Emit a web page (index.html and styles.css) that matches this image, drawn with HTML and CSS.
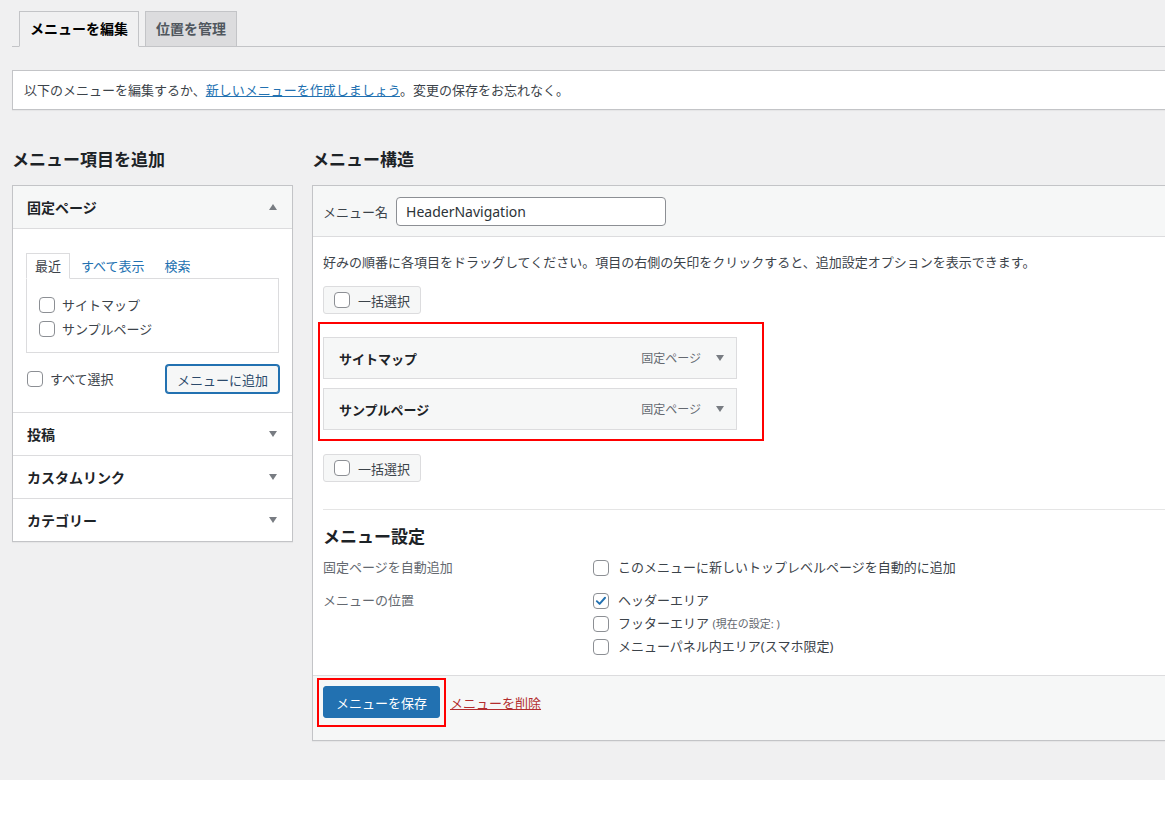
FILE: index.html
```html
<!DOCTYPE html>
<html lang="ja">
<head>
<meta charset="utf-8">
<title>メニュー</title>
<link rel="stylesheet" href="styles.css">
</head>
<body>
<div class="page">
  <div class="tabs">
    <span class="tab tab-active">メニューを編集</span>
    <span class="tab">位置を管理</span>
  </div>

  <div class="notice">
    <p>以下のメニューを編集するか、<a href="#">新しいメニューを作成しましょう</a>。変更の保存をお忘れなく。</p>
  </div>

  <div class="columns">
    <div class="col-left">
      <h2 class="col-title">メニュー項目を追加</h2>
      <div class="accordion">
        <div class="acc-section">
          <div class="acc-head acc-open"><span>固定ページ</span><i class="tri tri-up"></i></div>
          <div class="acc-body">
            <ul class="mini-tabs">
              <li class="mini-active">最近</li>
              <li><a href="#">すべて表示</a></li>
              <li><a href="#">検索</a></li>
            </ul>
            <div class="tab-panel">
              <label class="check"><span class="cb"></span>サイトマップ</label>
              <label class="check"><span class="cb"></span>サンプルページ</label>
            </div>
            <div class="add-row">
              <label class="check"><span class="cb"></span>すべて選択</label>
              <button class="btn-secondary">メニューに追加</button>
            </div>
          </div>
        </div>
        <div class="acc-section">
          <div class="acc-head"><span>投稿</span><i class="tri"></i></div>
        </div>
        <div class="acc-section">
          <div class="acc-head"><span>カスタムリンク</span><i class="tri"></i></div>
        </div>
        <div class="acc-section">
          <div class="acc-head"><span>カテゴリー</span><i class="tri"></i></div>
        </div>
      </div>
    </div>

    <div class="col-right">
      <h2 class="col-title">メニュー構造</h2>
      <div class="menu-box">
        <div class="menu-head">
          <label class="name-label">メニュー名</label>
          <input class="name-input" type="text" value="HeaderNavigation">
        </div>
        <div class="menu-body">
          <p class="instruction">好みの順番に各項目をドラッグしてください。項目の右側の矢印をクリックすると、追加設定オプションを表示できます。</p>
          <label class="bulk"><span class="cb"></span>一括選択</label>

          <div class="highlight items-box">
            <div class="menu-item"><span class="item-title">サイトマップ</span><span class="item-meta">固定ページ<i class="tri"></i></span></div>
            <div class="menu-item"><span class="item-title">サンプルページ</span><span class="item-meta">固定ページ<i class="tri"></i></span></div>
          </div>

          <label class="bulk bulk-bottom"><span class="cb"></span>一括選択</label>

          <div class="settings">
            <h3 class="settings-title">メニュー設定</h3>
            <div class="setting-row">
              <div class="setting-label">固定ページを自動追加</div>
              <div class="setting-options">
                <label class="option"><span class="cb"></span><span>このメニューに新しいトップレベルページを自動的に追加</span></label>
              </div>
            </div>
            <div class="setting-row setting-row-2">
              <div class="setting-label">メニューの位置</div>
              <div class="setting-options">
                <label class="option"><span class="cb cb-checked"><svg viewBox="0 0 16 16" width="16" height="16"><path d="M3.2 8.2 6.4 11.3 12.6 4.3" fill="none" stroke="#2271b1" stroke-width="2.2" stroke-linecap="round" stroke-linejoin="round"/></svg></span><span>ヘッダーエリア</span></label>
                <label class="option"><span class="cb"></span><span>フッターエリア <span class="small-note">(現在の設定: )</span></span></label>
                <label class="option"><span class="cb"></span><span>メニューパネル内エリア(スマホ限定)</span></label>
              </div>
            </div>
          </div>
        </div>
        <div class="menu-foot">
          <div class="highlight save-box">
            <button class="btn-primary">メニューを保存</button>
          </div>
          <a class="delete-link" href="#">メニューを削除</a>
        </div>
      </div>
    </div>
  </div>
</div>
</body>
</html>
```

FILE: styles.css
```css
html, body {
  margin: 0;
  padding: 0;
}

body {
  background: #ffffff;
  font-family: "Noto Sans", "Noto Sans CJK JP", sans-serif;
  font-size: 13px;
  color: #3c434a;
  overflow: hidden;
}

a {
  color: #2271b1;
}

.page {
  box-sizing: border-box;
  width: calc(100% + 30px);
  background: #f0f0f1;
  padding: 0 0 39px 12px;
}

/* top tabs */
.tabs {
  display: flex;
  gap: 6px;
  padding: 11px 0 0 7px;
  border-bottom: 1px solid #c3c4c7;
}

.tab {
  display: block;
  padding: 0 10px;
  line-height: 34px;
  font-size: 14px;
  font-weight: 700;
  color: #50575e;
  background: #dcdcde;
  border: 1px solid #c3c4c7;
  margin-bottom: -1px;
}

.tab-active {
  background: #f0f0f1;
  color: #000;
  border-bottom-color: #f0f0f1;
}

/* notice */
.notice {
  margin-top: 23px;
  background: #fff;
  border: 1px solid #c3c4c7;
  padding: 10px 11px;
  box-shadow: 0 1px 1px rgba(0, 0, 0, 0.04);
}

.notice p {
  margin: 0;
  line-height: 18px;
}

/* columns */
.columns {
  display: flex;
  gap: 19px;
  margin-top: 38px;
  align-items: flex-start;
}

.col-left {
  width: 281px;
  flex: none;
}

.col-right {
  flex: 1;
  min-width: 0;
}

.col-title {
  margin: 0 0 13px;
  font-size: 17px;
  line-height: 24px;
  font-weight: 700;
  color: #1d2327;
}

/* accordion */
.accordion {
  background: #fff;
  border: 1px solid #c3c4c7;
  box-shadow: 0 1px 1px rgba(0, 0, 0, 0.04);
}

.acc-section + .acc-section {
  border-top: 1px solid #dcdcde;
}

.acc-head {
  height: 42px;
  display: flex;
  align-items: center;
  justify-content: space-between;
  padding: 0 15px 0 14px;
  font-size: 14px;
  font-weight: 700;
  color: #1d2327;
}

.acc-open {
  background: #f6f7f7;
  border-bottom: 1px solid #dcdcde;
}

.tri {
  display: inline-block;
  width: 0;
  height: 0;
  border-left: 4px solid transparent;
  border-right: 4px solid transparent;
  border-top: 6px solid #787c82;
}

.tri-up {
  border-top: 0;
  border-bottom: 6px solid #787c82;
}

.acc-body {
  padding: 24px 13px 18px;
}

.mini-tabs {
  display: flex;
  gap: 2px;
  list-style: none;
  margin: 0;
  padding: 0;
  position: relative;
  z-index: 1;
}

.mini-tabs li {
  padding: 0 8px;
  line-height: 24px;
  border: 1px solid transparent;
  margin-bottom: -1px;
}

.mini-tabs a {
  text-decoration: none;
}

.mini-tabs .mini-active {
  border-color: #dcdcde;
  border-bottom-color: #fff;
  background: #fff;
}

.tab-panel {
  border: 1px solid #dcdcde;
  padding: 14px 12px 11px;
  display: flex;
  flex-direction: column;
}

.check {
  display: flex;
  align-items: center;
  gap: 7px;
  line-height: 24px;
}

.cb {
  box-sizing: border-box;
  display: inline-flex;
  align-items: center;
  justify-content: center;
  width: 16px;
  height: 16px;
  flex: none;
  border: 1px solid #8c8f94;
  border-radius: 4px;
  background: #fff;
}

.add-row {
  display: flex;
  justify-content: space-between;
  align-items: center;
  margin-top: 11px;
  padding-left: 1px;
  height: 30px;
}

.btn-secondary {
  box-sizing: border-box;
  height: 28px;
  padding: 0 10px;
  font-family: inherit;
  font-size: 13px;
  color: #2c4a6b;
  background: #f6f7f7;
  border: 1px solid #2271b1;
  border-radius: 3px;
  box-shadow: 0 0 0 1px #2271b1;
}

/* menu structure */
.menu-box {
  background: #fff;
  border: 1px solid #c3c4c7;
  box-shadow: 0 1px 1px rgba(0, 0, 0, 0.04);
}

.menu-head {
  display: flex;
  align-items: center;
  gap: 8px;
  padding: 11px 10px 10px;
  background: #f6f7f7;
  border-bottom: 1px solid #dcdcde;
}

.name-input {
  box-sizing: border-box;
  width: 270px;
  height: 29px;
  padding: 0 9px;
  border: 1px solid #8c8f94;
  border-radius: 4px;
  font-family: "Noto Sans", "Noto Sans CJK JP", sans-serif;
  font-size: 14px;
  color: #2c3338;
  background: #fff;
}

.menu-body {
  padding: 0 10px 17px;
}

.instruction {
  margin: 16px 0 0;
  line-height: 18px;
}

.bulk {
  box-sizing: border-box;
  display: flex;
  width: 98px;
  height: 28px;
  align-items: center;
  gap: 8px;
  margin-top: 15px;
  padding: 0 10px;
  background: #f6f7f7;
  border: 1px solid #dcdcde;
  border-radius: 3px;
}

.bulk-bottom {
  margin-top: 13px;
}

.highlight {
  box-sizing: border-box;
  border: 2px solid #ff0000;
}

.items-box {
  width: 446px;
  margin: 8px 0 0 -5px;
  padding: 13px 25px 9px 3px;
  display: flex;
  flex-direction: column;
  gap: 9px;
}

.menu-item {
  box-sizing: border-box;
  height: 42px;
  display: flex;
  align-items: center;
  justify-content: space-between;
  padding: 0 12px 0 15px;
  background: #f6f7f7;
  border: 1px solid #dcdcde;
}

.item-title {
  font-weight: 700;
  color: #1d2327;
}

.item-meta {
  display: flex;
  align-items: center;
  gap: 15px;
  font-size: 12px;
  color: #646970;
}

.settings {
  margin-top: 27px;
  border-top: 1px solid #e5e5e5;
  padding-top: 15px;
}

.settings-title {
  margin: 0;
  font-size: 17px;
  line-height: 24px;
  font-weight: 700;
  color: #1d2327;
}

.setting-row {
  display: grid;
  grid-template-columns: 270px 1fr;
  margin-top: 7px;
}

.setting-row-2 {
  margin-top: 10px;
}

.setting-label {
  line-height: 23px;
  color: #646970;
}

.option {
  display: flex;
  align-items: center;
  gap: 9px;
  line-height: 23px;
}

.small-note {
  font-size: 11px;
  color: #646970;
}

.menu-foot {
  display: flex;
  align-items: center;
  gap: 4px;
  padding: 2px 10px 13px 4px;
  background: #f6f7f7;
  border-top: 1px solid #dcdcde;
}

.save-box {
  padding: 6px 4px 7px;
}

.btn-primary {
  display: block;
  height: 32px;
  padding: 0 12px;
  font-family: inherit;
  font-size: 13px;
  color: #fff;
  background: #2271b1;
  border: 1px solid #2271b1;
  border-radius: 3px;
}

.delete-link {
  color: #b32d2e;
  text-decoration: underline;
  line-height: 18px;
}
```
